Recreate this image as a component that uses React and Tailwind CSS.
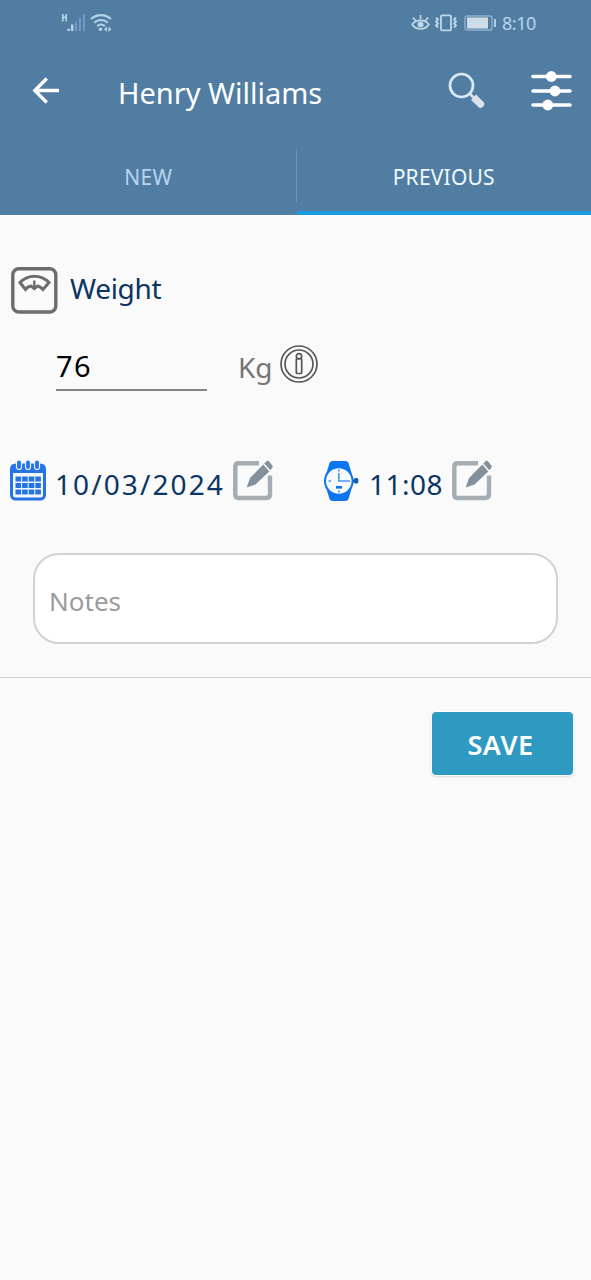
import React, { useState } from 'react';

const SignalIcon = () => (
  <svg width="26" height="20" viewBox="0 0 26 20" fill="#b4d2e8" className="shrink-0">
    <path d="M1 1h1.600v2.600h1.800V1H6v7.500H4.400V5.200H2.600v3.300H1z" />
    <rect x="6.500" y="15.500" width="2.500" height="2.500" />
    <rect x="10" y="11.500" width="2.500" height="6.500" />
    <g fill="#749bbd">
      <rect x="14" y="8.500" width="2" height="9.500" />
      <rect x="18" y="5" width="2" height="13" />
      <rect x="22" y="1" width="2" height="17" />
    </g>
  </svg>
);

const WifiIcon = () => (
  <svg width="22" height="20" viewBox="0 0 22 20" fill="none" stroke="#b4d2e8" strokeWidth="2.200" className="shrink-0">
    <path d="M1 6C7 .800 15 .800 21 6M4.200 9.700c4-3.600 9.600-3.600 13.600 0M7.200 13.100c2.200-2 5.400-2 7.600 0" />
    <circle cx="10.500" cy="16.300" r="1.800" fill="#b4d2e8" stroke="none" />
    <path d="M17 13.500v5.400l-3-2.700zM18.400 13.500v5.400l3-2.700z" fill="#b4d2e8" stroke="none" />
  </svg>
);

const EyeIcon = () => (
  <svg width="19" height="18" viewBox="0 0 19 18" fill="none" stroke="#c3d7e8" strokeWidth="1.700" className="shrink-0">
    <path d="M1.200 10.500C5 5 14 5 17.800 10.500C14 16.500 5 16.500 1.200 10.500zM9.500 1v4M2 3.500l2.400 3M17 3.500l-2.400 3" />
    <circle cx="9.500" cy="10.500" r="3" fill="#c3d7e8" stroke="none" />
  </svg>
);

const VibrateIcon = () => (
  <svg width="22" height="18" viewBox="0 0 22 18" fill="none" stroke="#c3d7e8" strokeWidth="1.800" className="shrink-0">
    <rect x="6" y="1.300" width="10" height="15" rx="1" />
    <path d="M1 3.500l2 2-2 2 2 2-2 2 2 2M21 3.500l-2 2 2 2-2 2 2 2-2 2" />
  </svg>
);

const BatteryIcon = () => (
  <svg width="33" height="16" viewBox="0 0 33 16" className="shrink-0">
    <rect x="1" y="1" width="27" height="14" rx="2" fill="none" stroke="#91b1cb" strokeWidth="1.400" />
    <rect x="3" y="2.500" width="21" height="11" fill="#cfdde9" />
    <rect x="30" y="4" width="2" height="8" fill="#b4cde0" />
  </svg>
);

const BackIcon = () => (
  <svg width="28" height="28" viewBox="0 0 28 28" fill="none" stroke="#fff" strokeWidth="3.300">
    <path d="M27 13.500H3M14.800 1.500L2.800 13.500l12 12" />
  </svg>
);

const SearchIcon = () => (
  <svg width="38" height="38" viewBox="0 0 38 38" fill="none">
    <circle cx="13.500" cy="13.500" r="11.500" stroke="#dbe9f7" strokeWidth="2.700" />
    <path d="M21.500 21.500l4 4" stroke="#dbe3ec" strokeWidth="2.500" />
    <path d="M24 28l4-4.500 7 7q1.300 1.500-.3 3.500-1.700 2-3.500.8z" fill="#dbe3ec" stroke="#dbe3ec" strokeWidth="1.400" strokeLinejoin="round" />
  </svg>
);

const SlidersIcon = () => (
  <svg width="41" height="40" viewBox="0 0 41 40" fill="#fff">
    <path d="M2 5.500h37M2 20h37M2 34h37" stroke="#fff" strokeWidth="3.600" strokeLinecap="round" />
    <circle cx="20.300" cy="5.500" r="5.400" />
    <circle cx="24" cy="20" r="5.400" />
    <circle cx="16.800" cy="34" r="5.400" />
  </svg>
);

const ScaleIcon = () => (
  <svg width="48" height="48" viewBox="0 0 48 48" fill="none" stroke="#6a6c6e" strokeWidth="3.400">
    <rect x="2.800" y="2.700" width="43" height="43.300" rx="6" />
    <path d="M10 16.500C18 8 31 8 39 16.500L33 23.500Q30.500 20.500 27.500 20l-3.200 2.500L21 20q-3.500.5-5.500 3.500z" strokeWidth="3" />
    <path d="M24.300 14.500V22" strokeWidth="2.400" />
  </svg>
);

const InfoIcon = () => (
  <svg width="38" height="38" viewBox="0 0 38 38" fill="none" stroke="#575757" strokeWidth="1.700">
    <circle cx="19" cy="19" r="18" />
    <circle cx="19" cy="19" r="14" />
    <circle cx="19" cy="11.300" r="2.700" />
    <rect x="16.300" y="13.500" width="5.400" height="15" rx="1" />
  </svg>
);

const CalendarIcon = () => (
  <svg width="36" height="41" viewBox="0 0 36 41">
    <rect x="1.500" y="5" width="33" height="34" rx="4" fill="#f3f8ff" stroke="#2673e6" strokeWidth="3" />
    <path d="M1 13V8q0-4 4-4h26q4 0 4 4v5z" fill="#2673e6" />
    <g fill="#2673e6" stroke="#e7f1ff" strokeWidth="1.200">
      <rect x="6.500" y="0" width="5" height="9.500" rx="2.500" />
      <rect x="15.500" y="0" width="5" height="9.500" rx="2.500" />
      <rect x="24.500" y="0" width="5" height="9.500" rx="2.500" />
    </g>
    <path d="M5.500 19h25.500M5.500 25.500h25.500M5.500 32h25.500" stroke="#2673e6" strokeWidth="5" strokeDasharray="5.600 1" />
  </svg>
);

const WatchIcon = () => (
  <svg width="36" height="40" viewBox="0 0 36 40">
    <path d="M6.500 2q1-2 3-2h13q2 0 3 2l3 10v16l-3 10q-1 2-3 2h-13q-2 0-3-2l-3-10V12z" fill="#0b76ef" />
    <rect x="29" y="18.400" width="5" height="3" fill="#0b5fc0" />
    <rect x="31" y="17" width="4.300" height="5.500" rx="1.500" fill="#125ca9" />
    <circle cx="15.800" cy="20" r="13.800" fill="#f7fbff" stroke="#0b76ef" strokeWidth="2" />
    <path d="M15.800 12v8H25M15.800 8.500v2M5.500 20h2.500M24.500 20H27M15.800 29.500v2" fill="none" stroke="#4c98ee" strokeWidth="1.700" />
    <rect x="13" y="25" width="6" height="2.600" fill="#0b76ef" />
  </svg>
);

const EditIcon = () => (
  <svg width="41" height="41" viewBox="0 0 41 41" fill="none">
    <path d="M26 3.300H5.500Q2.300 3.300 2.300 7v27.500q0 3.500 3.200 3.500h27.500q4 0 4-4V15.500" stroke="#a4adb3" strokeWidth="4.400" />
    <path d="M13.700 27.500L17 18 30.300 4.500l6 7L22.500 24.500z" fill="#82919b" />
    <path d="M31.300 3.500L34 .8q1-.5 2 .5l3.500 4.500q.5 1-.2 2l-1.900 2.400z" fill="#82919b" />
  </svg>
);

const Tab = ({ label, active, onClick }) => (
  <button
    onClick={onClick}
    className={`flex-1 border-b-4 text-[21px] leading-[58px] tracking-[0.2px] pb-[5px] ${active ? 'border-[#1b9ce2] text-[#f0f9ff]' : 'border-transparent text-[#b9d4ef]'}`}
  >
    {label}
  </button>
);

const App = () => {
  const [tab, setTab] = useState('PREVIOUS');

  return (
    <div className="min-h-screen bg-[#fafafa] font-['Noto_Sans',sans-serif]">
      <header className="flex h-[215px] flex-col bg-[#517da2]">
        <div className="flex h-[45px] items-center pl-[61px] pr-[55px]">
          <SignalIcon />
          <div className="ml-[3px] flex"><WifiIcon /></div>
          <div className="ml-auto flex items-center">
            <EyeIcon />
            <div className="ml-[5px] flex"><VibrateIcon /></div>
            <div className="ml-[7px] flex"><BatteryIcon /></div>
            <span className="ml-[5px] text-[18px] leading-6 tracking-[-0.4px] text-[#b9d6ec]">8:10</span>
          </div>
        </div>
        <div className="flex h-[91px] items-center pl-8 pr-[19px]">
          <BackIcon />
          <h1 className="ml-[58px] mt-[5px] text-[29px] leading-10 text-white">Henry Williams</h1>
          <div className="ml-auto flex items-center gap-[45px]">
            <SearchIcon />
            <SlidersIcon />
          </div>
        </div>
        <div className="flex flex-1 items-end pl-px">
          <Tab label="NEW" active={tab === 'NEW'} onClick={() => setTab('NEW')} />
          <div className="mb-[13px] h-[53px] w-px bg-[#6f94b4]" />
          <Tab label="PREVIOUS" active={tab === 'PREVIOUS'} onClick={() => setTab('PREVIOUS')} />
        </div>
      </header>

      <main>
        <div className="flex items-center pl-[10px] pt-[51px]">
          <ScaleIcon />
          <h2 className="-mt-1 ml-3 text-[28px] leading-10 tracking-[-0.3px] text-[#0b3563]">Weight</h2>
        </div>

        <div className="mt-[30px] flex items-start pl-14">
          <div className="h-[47px] w-[151px] border-b-2 border-[#858585] text-[29px] leading-[44px] tracking-[1.5px] text-black">76</div>
          <span className="ml-[31px] text-[28px] leading-[46px] text-[#757575]">Kg</span>
          <div className="ml-[7px] mt-[1px]"><InfoIcon /></div>
        </div>

        <div className="mt-[69px] flex h-[41px] items-center pl-[10px]">
          <CalendarIcon />
          <span className="ml-[9px] mt-[6px] w-[178px] text-[28px] leading-10 tracking-[2.100px] text-[#0b3563]">10/03/2024</span>
          <EditIcon />
          <div className="ml-[49px]"><WatchIcon /></div>
          <span className="ml-[10px] mt-[6px] w-[83px] text-[28px] leading-10 tracking-[0.5px] text-[#0b3563]">11:08</span>
          <EditIcon />
        </div>

        <div className="mx-[33px] mt-[52px] h-[91px] rounded-[26px] border-2 border-[#d2d2d2] bg-white px-[14px] text-[26px] leading-[93px] text-[#9b9b9b]">
          Notes
        </div>

        <div className="mt-[33px] border-t border-[#cfcfcf] pr-[17px] pt-[33px]">
          <button className="ml-auto block h-[65px] w-[143px] rounded-[5px] border border-white bg-[#2e9ac2] pr-1 text-[27px] font-semibold leading-[66px] tracking-[0.5px] text-white shadow-sm">
            SAVE
          </button>
        </div>
      </main>
    </div>
  );
};

export default App;
